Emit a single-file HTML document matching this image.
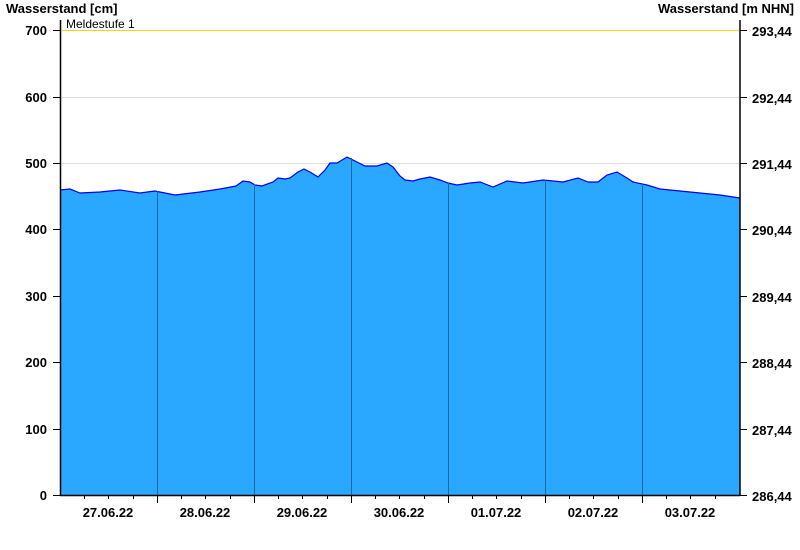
<!DOCTYPE html>
<html><head><meta charset="utf-8"><style>
html,body{margin:0;padding:0;background:#fff;}
svg{display:block;font-family:"Liberation Sans",sans-serif;}
.b{font-weight:bold;font-size:13px;fill:#000;}
</style></head><body>
<svg width="800" height="550" viewBox="0 0 800 550" xmlns="http://www.w3.org/2000/svg">
<text x="6" y="13" class="b">Wasserstand [cm]</text>
<text x="794" y="13" class="b" text-anchor="end">Wasserstand [m NHN]</text>
<g stroke="#dddddd" stroke-width="1">
<line x1="60" y1="97.5" x2="740" y2="97.5"/>
<line x1="60" y1="163.5" x2="740" y2="163.5"/>
<line x1="60" y1="229.5" x2="740" y2="229.5"/>
<line x1="60" y1="296.5" x2="740" y2="296.5"/>
<line x1="60" y1="362.5" x2="740" y2="362.5"/>
<line x1="60" y1="429.5" x2="740" y2="429.5"/>
</g>
<polygon fill="#2aa7ff" stroke="none" points="60,495 60,190 70,189 80,193 100,192 120,190 140,193 155,191 175,195 200,192 220,189 236,186 243,181 250,182 255,185 262,186 273,182 278,178 285,179 290,178 298,172 304,169 310,172 318,177 325,170 330,163 337,163 347,157 353,160 365,166 377,166 387,163 393,167 400,176 405,180 413,181 420,179 430,177 440,180 448,183 457,185 470,183 480,182 493,187 507,181 523,183 530,182 543,180 563,182 578,178 588,182 598,182 607,175 617,172 627,178 633,182 647,185 660,189 680,191 700,193 720,195 740,198 740,495"/>
<polyline fill="none" stroke="#0000ee" stroke-width="1.2" points="60,190 70,189 80,193 100,192 120,190 140,193 155,191 175,195 200,192 220,189 236,186 243,181 250,182 255,185 262,186 273,182 278,178 285,179 290,178 298,172 304,169 310,172 318,177 325,170 330,163 337,163 347,157 353,160 365,166 377,166 387,163 393,167 400,176 405,180 413,181 420,179 430,177 440,180 448,183 457,185 470,183 480,182 493,187 507,181 523,183 530,182 543,180 563,182 578,178 588,182 598,182 607,175 617,172 627,178 633,182 647,185 660,189 680,191 700,193 720,195 740,198"/>
<g stroke="#1a6aa0" stroke-width="1">
<line x1="157.5" y1="191" x2="157.5" y2="495"/>
<line x1="254.5" y1="184" x2="254.5" y2="495"/>
<line x1="351.5" y1="158" x2="351.5" y2="495"/>
<line x1="448.5" y1="183" x2="448.5" y2="495"/>
<line x1="545.5" y1="180" x2="545.5" y2="495"/>
<line x1="642.5" y1="184" x2="642.5" y2="495"/>
</g>
<line x1="60" y1="30.5" x2="740" y2="30.5" stroke="#ffcc22" stroke-width="1"/>
<text x="66" y="28" font-size="12" fill="#000">Meldestufe 1</text>
<g stroke="#000" stroke-width="1.5" fill="none">
<line x1="60.5" y1="20" x2="60.5" y2="496"/>
<line x1="740" y1="20" x2="740" y2="496"/>
<line x1="60" y1="495.5" x2="740" y2="495.5"/>
</g>
<g stroke="#000" stroke-width="1">
<line x1="53" y1="30.5" x2="60" y2="30.5"/><line x1="53" y1="97.5" x2="60" y2="97.5"/><line x1="53" y1="163.5" x2="60" y2="163.5"/><line x1="53" y1="229.5" x2="60" y2="229.5"/><line x1="53" y1="296.5" x2="60" y2="296.5"/><line x1="53" y1="362.5" x2="60" y2="362.5"/><line x1="53" y1="429.5" x2="60" y2="429.5"/><line x1="53" y1="495.5" x2="60" y2="495.5"/>
<line x1="740" y1="30.5" x2="747" y2="30.5"/><line x1="740" y1="97.5" x2="747" y2="97.5"/><line x1="740" y1="163.5" x2="747" y2="163.5"/><line x1="740" y1="229.5" x2="747" y2="229.5"/><line x1="740" y1="296.5" x2="747" y2="296.5"/><line x1="740" y1="362.5" x2="747" y2="362.5"/><line x1="740" y1="429.5" x2="747" y2="429.5"/><line x1="740" y1="495.5" x2="747" y2="495.5"/>
<line x1="157.5" y1="495" x2="157.5" y2="503"/><line x1="254.5" y1="495" x2="254.5" y2="503"/><line x1="351.5" y1="495" x2="351.5" y2="503"/><line x1="448.5" y1="495" x2="448.5" y2="503"/><line x1="545.5" y1="495" x2="545.5" y2="503"/><line x1="642.5" y1="495" x2="642.5" y2="503"/>
</g>
<g stroke="#000" stroke-width="1" id="minor">
<line x1="84.5" y1="495" x2="84.5" y2="499"/><line x1="108.5" y1="495" x2="108.5" y2="499"/><line x1="133.5" y1="495" x2="133.5" y2="499"/>
<line x1="181.5" y1="495" x2="181.5" y2="499"/><line x1="205.5" y1="495" x2="205.5" y2="499"/><line x1="230.5" y1="495" x2="230.5" y2="499"/>
<line x1="278.5" y1="495" x2="278.5" y2="499"/><line x1="302.5" y1="495" x2="302.5" y2="499"/><line x1="327.5" y1="495" x2="327.5" y2="499"/>
<line x1="375.5" y1="495" x2="375.5" y2="499"/><line x1="399.5" y1="495" x2="399.5" y2="499"/><line x1="424.5" y1="495" x2="424.5" y2="499"/>
<line x1="472.5" y1="495" x2="472.5" y2="499"/><line x1="496.5" y1="495" x2="496.5" y2="499"/><line x1="521.5" y1="495" x2="521.5" y2="499"/>
<line x1="569.5" y1="495" x2="569.5" y2="499"/><line x1="593.5" y1="495" x2="593.5" y2="499"/><line x1="618.5" y1="495" x2="618.5" y2="499"/>
<line x1="666.5" y1="495" x2="666.5" y2="499"/><line x1="690.5" y1="495" x2="690.5" y2="499"/><line x1="715.5" y1="495" x2="715.5" y2="499"/>
</g>
<g class="b" text-anchor="end">
<text x="47" y="35" class="b" text-anchor="end">700</text>
<text x="47" y="102" class="b" text-anchor="end">600</text>
<text x="47" y="168" class="b" text-anchor="end">500</text>
<text x="47" y="234" class="b" text-anchor="end">400</text>
<text x="47" y="301" class="b" text-anchor="end">300</text>
<text x="47" y="367" class="b" text-anchor="end">200</text>
<text x="47" y="434" class="b" text-anchor="end">100</text>
<text x="47" y="500" class="b" text-anchor="end">0</text>
</g>
<g>
<text x="752" y="36" class="b">293,44</text>
<text x="752" y="103" class="b">292,44</text>
<text x="752" y="169" class="b">291,44</text>
<text x="752" y="235" class="b">290,44</text>
<text x="752" y="302" class="b">289,44</text>
<text x="752" y="368" class="b">288,44</text>
<text x="752" y="435" class="b">287,44</text>
<text x="752" y="501" class="b">286,44</text>
</g>
<g>
<text x="108" y="517" class="b" text-anchor="middle">27.06.22</text>
<text x="205" y="517" class="b" text-anchor="middle">28.06.22</text>
<text x="302" y="517" class="b" text-anchor="middle">29.06.22</text>
<text x="399" y="517" class="b" text-anchor="middle">30.06.22</text>
<text x="496" y="517" class="b" text-anchor="middle">01.07.22</text>
<text x="593" y="517" class="b" text-anchor="middle">02.07.22</text>
<text x="690" y="517" class="b" text-anchor="middle">03.07.22</text>
</g>
</svg>
</body></html>
